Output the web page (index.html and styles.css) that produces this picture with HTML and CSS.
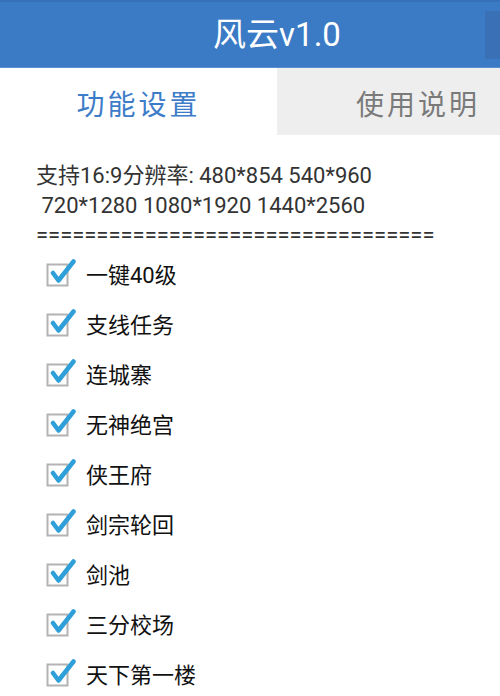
FILE: index.html
```html
<!DOCTYPE html>
<html lang="zh">
<head>
<meta charset="utf-8">
<title>风云v1.0</title>
<link rel="stylesheet" href="styles.css">
</head>
<body>
<div class="app">
  <header class="appbar">
    <h1 class="title">风云v1.0</h1>
    <span class="menu-stub"></span>
  </header>
  <nav class="tabs">
    <div class="tab active">功能设置</div>
    <div class="tab side">使用说明</div>
  </nav>
  <main class="content">
    <p class="info">支持16:9分辨率: 480*854 540*960<br>&nbsp;720*1280 1080*1920 1440*2560<br>=================================</p>
    <ul class="options">
      <li class="option"><svg class="cb" viewBox="0 0 30 30"><rect class="cb-box" x="1.5" y="6.5" width="20" height="21"/><path class="cb-check" d="M7 15 L12.5 22.5 L27.5 3.5"/></svg><span>一键40级</span></li>
      <li class="option"><svg class="cb" viewBox="0 0 30 30"><rect class="cb-box" x="1.5" y="6.5" width="20" height="21"/><path class="cb-check" d="M7 15 L12.5 22.5 L27.5 3.5"/></svg><span>支线任务</span></li>
      <li class="option"><svg class="cb" viewBox="0 0 30 30"><rect class="cb-box" x="1.5" y="6.5" width="20" height="21"/><path class="cb-check" d="M7 15 L12.5 22.5 L27.5 3.5"/></svg><span>连城寨</span></li>
      <li class="option"><svg class="cb" viewBox="0 0 30 30"><rect class="cb-box" x="1.5" y="6.5" width="20" height="21"/><path class="cb-check" d="M7 15 L12.5 22.5 L27.5 3.5"/></svg><span>无神绝宫</span></li>
      <li class="option"><svg class="cb" viewBox="0 0 30 30"><rect class="cb-box" x="1.5" y="6.5" width="20" height="21"/><path class="cb-check" d="M7 15 L12.5 22.5 L27.5 3.5"/></svg><span>侠王府</span></li>
      <li class="option"><svg class="cb" viewBox="0 0 30 30"><rect class="cb-box" x="1.5" y="6.5" width="20" height="21"/><path class="cb-check" d="M7 15 L12.5 22.5 L27.5 3.5"/></svg><span>剑宗轮回</span></li>
      <li class="option"><svg class="cb" viewBox="0 0 30 30"><rect class="cb-box" x="1.5" y="6.5" width="20" height="21"/><path class="cb-check" d="M7 15 L12.5 22.5 L27.5 3.5"/></svg><span>剑池</span></li>
      <li class="option"><svg class="cb" viewBox="0 0 30 30"><rect class="cb-box" x="1.5" y="6.5" width="20" height="21"/><path class="cb-check" d="M7 15 L12.5 22.5 L27.5 3.5"/></svg><span>三分校场</span></li>
      <li class="option"><svg class="cb" viewBox="0 0 30 30"><rect class="cb-box" x="1.5" y="6.5" width="20" height="21"/><path class="cb-check" d="M7 15 L12.5 22.5 L27.5 3.5"/></svg><span>天下第一楼</span></li>
    </ul>
  </main>
</div>
</body>
</html>
```

FILE: styles.css
```css
html, body {
  margin: 0;
  padding: 0;
  background: #ffffff;
}
body {
  font-family: Roboto, "Noto Sans CJK SC", sans-serif;
  width: 500px;
  height: 696px;
  overflow: hidden;
}
.app {
  display: flex;
  flex-direction: column;
}
.appbar {
  position: relative;
  height: 68px;
  box-sizing: border-box;
  background: #3b7ac5;
  border-top: 2px solid #3570b8;
  border-bottom: 1px solid #5a8fd0;
  display: flex;
  align-items: center;
  justify-content: center;
  padding-left: 54px;
}
.title {
  margin: 0;
  color: #ffffff;
  font-size: 33px;
  font-weight: normal;
  line-height: 1;
}
.menu-stub {
  position: absolute;
  right: 0;
  top: 9px;
  width: 15px;
  height: 48px;
  background: #3a70b6;
}
.tabs {
  display: grid;
  grid-template-columns: 277px 1fr;
  height: 67px;
}
.tab {
  display: flex;
  align-items: center;
  justify-content: center;
  font-size: 28px;
  letter-spacing: 3px;
  color: #7a7a7a;
  background: #eeeeee;
  padding-top: 2px;
  white-space: nowrap;
}
.tab.side {
  justify-content: flex-start;
  padding-left: 79px;
}
.tab.active {
  color: #3d7cc8;
  background: #ffffff;
}
.content {
  padding: 26px 0 0 36px;
}
.info {
  margin: 0;
  font-size: 22px;
  line-height: 29.5px;
  color: #333333;
  white-space: nowrap;
}
.options {
  list-style: none;
  margin: 0;
  padding: 0 0 0 10px;
}
.option {
  height: 50px;
  display: flex;
  align-items: center;
  gap: 10px;
  font-size: 22px;
  color: #111111;
}
.option span {
  margin-bottom: 3px;
}
.cb {
  width: 30px;
  height: 30px;
  flex: none;
  margin-top: -4px;
}
.cb-box {
  fill: #ffffff;
  stroke: #b3b3b3;
  stroke-width: 2;
}
.cb-check {
  fill: none;
  stroke: #2e9fd8;
  stroke-width: 4.5;
  stroke-linecap: round;
  stroke-linejoin: round;
}
```
